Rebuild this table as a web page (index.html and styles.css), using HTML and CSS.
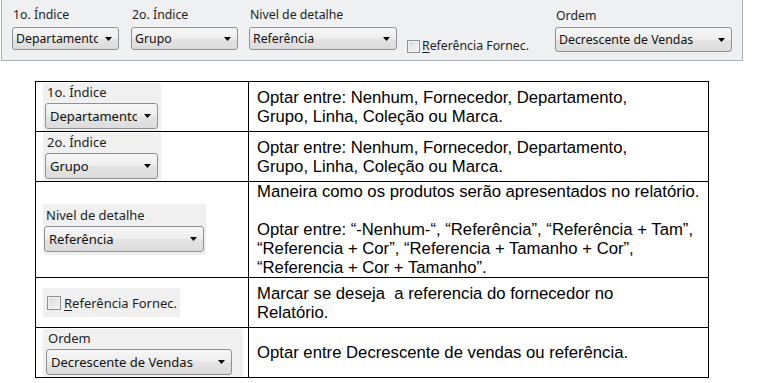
FILE: index.html
```html
<!DOCTYPE html>
<html lang="pt-BR">
<head>
<meta charset="utf-8">
<title>Filtros do relatório</title>
<link rel="stylesheet" href="styles.css">
</head>
<body>
  <div class="toolbar">
    <div class="field field--dept">
      <span class="field-label">1o. Índice</span>
      <div class="combo">
        <span class="combo-text">Departamento</span>
        <span class="combo-btn"><svg class="combo-arrow" viewBox="0 0 7 4" width="7" height="4"><path d="M0 0H7L3.5 4Z"/></svg></span>
      </div>
    </div>
    <div class="field field--group">
      <span class="field-label">2o. Índice</span>
      <div class="combo">
        <span class="combo-text">Grupo</span>
        <span class="combo-btn"><svg class="combo-arrow" viewBox="0 0 7 4" width="7" height="4"><path d="M0 0H7L3.5 4Z"/></svg></span>
      </div>
    </div>
    <div class="field field--level">
      <span class="field-label">Nivel de detalhe</span>
      <div class="combo">
        <span class="combo-text">Referência</span>
        <span class="combo-btn"><svg class="combo-arrow" viewBox="0 0 7 4" width="7" height="4"><path d="M0 0H7L3.5 4Z"/></svg></span>
      </div>
    </div>
    <label class="check">
      <span class="check-box"></span>
      <span class="check-text"><u>R</u>eferência Fornec.</span>
    </label>
    <div class="field field--order">
      <span class="field-label">Ordem</span>
      <div class="combo combo--tall">
        <span class="combo-text">Decrescente de Vendas</span>
        <span class="combo-btn"><svg class="combo-arrow" viewBox="0 0 7 4" width="7" height="4"><path d="M0 0H7L3.5 4Z"/></svg></span>
      </div>
    </div>
  </div>

  <table class="spec">
    <colgroup>
      <col class="spec-col-ctrl">
      <col class="spec-col-desc">
    </colgroup>
    <tr>
      <td class="spec-ctrl">
        <div class="shot shot--index">
          <span class="shot-label">1o. Índice</span>
          <div class="combo combo--shot">
            <span class="combo-text">Departamento</span>
            <span class="combo-btn"><svg class="combo-arrow" viewBox="0 0 7 4" width="7" height="4"><path d="M0 0H7L3.5 4Z"/></svg></span>
          </div>
        </div>
      </td>
      <td class="spec-desc">Optar entre: Nenhum, Fornecedor, Departamento,<br>Grupo, Linha, Coleção ou Marca.</td>
    </tr>
    <tr>
      <td class="spec-ctrl">
        <div class="shot shot--index">
          <span class="shot-label">2o. Índice</span>
          <div class="combo combo--shot">
            <span class="combo-text">Grupo</span>
            <span class="combo-btn"><svg class="combo-arrow" viewBox="0 0 7 4" width="7" height="4"><path d="M0 0H7L3.5 4Z"/></svg></span>
          </div>
        </div>
      </td>
      <td class="spec-desc">Optar entre: Nenhum, Fornecedor, Departamento,<br>Grupo, Linha, Coleção ou Marca.</td>
    </tr>
    <tr>
      <td class="spec-ctrl">
        <div class="shot shot--level">
          <span class="shot-label">Nivel de detalhe</span>
          <div class="combo combo--shot">
            <span class="combo-text">Referência</span>
            <span class="combo-btn"><svg class="combo-arrow" viewBox="0 0 7 4" width="7" height="4"><path d="M0 0H7L3.5 4Z"/></svg></span>
          </div>
        </div>
      </td>
      <td class="spec-desc">Maneira como os produtos serão apresentados no relatório.<br><br>Optar entre: “-Nenhum-“, “Referência”, “Referência + Tam”,<br>“Referencia + Cor”, “Referencia + Tamanho + Cor”,<br>“Referencia + Cor + Tamanho”.</td>
    </tr>
    <tr>
      <td class="spec-ctrl">
        <div class="shot shot--check">
          <span class="check-box check-box--shot"></span>
          <span class="check-text"><u>R</u>eferência Fornec.</span>
        </div>
      </td>
      <td class="spec-desc">Marcar se deseja&nbsp; a referencia do fornecedor no<br>Relatório.</td>
    </tr>
    <tr>
      <td class="spec-ctrl">
        <div class="shot shot--order">
          <span class="shot-label">Ordem</span>
          <div class="combo combo--shot">
            <span class="combo-text">Decrescente de Vendas</span>
            <span class="combo-btn"><svg class="combo-arrow" viewBox="0 0 7 4" width="7" height="4"><path d="M0 0H7L3.5 4Z"/></svg></span>
          </div>
        </div>
      </td>
      <td class="spec-desc">Optar entre Decrescente de vendas ou referência.</td>
    </tr>
  </table>
</body>
</html>
```

FILE: styles.css
```css
* {
  box-sizing: border-box;
}

html,
body {
  margin: 0;
  background: #ffffff;
}

body {
  font-family: "Noto Sans", "Open Sans", sans-serif;
  color: #1e1e1e;
}

/* ---------- filter bar ---------- */

.toolbar {
  display: flex;
  align-items: flex-start;
  width: 742px;
  height: 61px;
  margin-left: 1px;
  padding: 7px 10px 0;
  background: #eff0f2;
  border: 1px solid #a9b1bb;
  border-top: none;
  font-size: 12.3px;
}

.field {
  display: flex;
  flex-direction: column;
  flex: none;
}

.field-label {
  line-height: 16px;
  margin: 0 0 4px 1px;
  color: #1e1e1e;
}

.field--dept {
  width: 107px;
}

.field--group {
  width: 107px;
  margin-left: 12px;
}

.field--level {
  width: 148px;
  margin-left: 11px;
}

.field--order {
  width: 177px;
  margin-left: auto;
}

.field--order .field-label {
  margin-top: 1px;
  margin-bottom: 3px;
}

/* ---------- combo box ---------- */

.combo {
  display: flex;
  align-items: center;
  height: 23px;
  padding-left: 3px;
  border: 1px solid #8e9196;
  border-radius: 3px;
  background: linear-gradient(#f6f6f6, #eeeeee 50%, #e4e4e4 52%, #dcdcdc);
  color: #111;
  overflow: hidden;
}

.combo--tall {
  height: 25px;
}

.combo-text {
  flex: 1;
  min-width: 0;
  overflow: hidden;
  white-space: nowrap;
  line-height: 16px;
}

.combo-btn {
  flex: none;
  width: 20px;
  display: flex;
  justify-content: center;
  align-items: center;
}

.combo-arrow {
  display: block;
  fill: #000;
}

/* ---------- check box ---------- */

.check {
  display: flex;
  align-items: center;
  flex: none;
  margin: 31px 0 0 10px;
  gap: 2px;
}

.check-box {
  width: 13px;
  height: 13px;
  flex: none;
  border: 1px solid #8f9195;
  background: linear-gradient(135deg, #d9d9d9, #f7f7f7);
  box-shadow: inset 0 0 0 1px #f3f3f3;
}

.check-text {
  line-height: 16px;
  white-space: nowrap;
}

.check-text u {
  text-decoration-thickness: 1px;
  text-underline-offset: 2px;
}

/* ---------- description table ---------- */

.spec {
  border-collapse: collapse;
  table-layout: fixed;
  width: 674px;
  margin: 20px 0 0 35px;
}

.spec-col-ctrl {
  width: 213px;
}

.spec td {
  border: 1px solid #000;
  padding: 0;
  height: 50px;
  vertical-align: middle;
}

.spec td.spec-ctrl {
  padding-left: 7px;
}

.spec td.spec-desc {
  padding: 0 4px 0 8px;
  font-family: "Liberation Sans", Arial, sans-serif;
  font-size: 16.7px;
  line-height: 19px;
  color: #000;
  white-space: nowrap;
}

/* small captures of the form controls shown beside each description */

.shot {
  display: flex;
  flex-direction: column;
  width: max-content;
  background: #f0f0f0;
  font-size: 13px;
  color: #1e1e1e;
}

.shot-label {
  line-height: 17px;
  margin-left: 2px;
}

.combo--shot {
  height: 26px;
  margin-top: 2px;
  padding-left: 4px;
}

.shot--index {
  padding: 1px 3px 2px 2px;
}

.shot--index .combo--shot {
  width: 113px;
}

.shot--level {
  padding: 3px 2px 3px 1px;
}

.shot--level .combo--shot {
  width: 160px;
}

.shot--check {
  flex-direction: row;
  align-items: center;
  gap: 3px;
  height: 29px;
  padding: 0 3px 0 4px;
}

.check-box--shot {
  width: 14px;
  height: 14px;
}

.shot--order {
  padding: 1px 11px 2px 3px;
}

.shot--order .combo--shot {
  width: 186px;
}
```
